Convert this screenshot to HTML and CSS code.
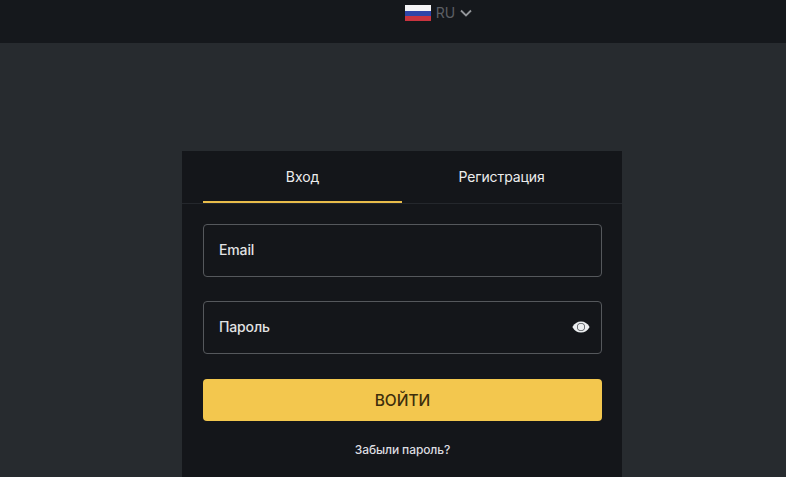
FILE: index.html
```html
<!DOCTYPE html>
<html lang="ru">
<head>
<meta charset="utf-8">
<title>Вход</title>
<link rel="stylesheet" href="styles.css">
</head>
<body>
<header class="topbar">
  <div class="lang">
    <svg class="flag" viewBox="0 0 26 16" width="26" height="16"><rect width="26" height="6" fill="#f4f4f6"/><rect y="6" width="26" height="5" fill="#2f46a8"/><rect y="11" width="26" height="5" fill="#c9343f"/></svg>
    <span class="lang-code">RU</span>
    <svg class="chev" viewBox="0 0 12 8" width="12" height="8"><path d="M1 1.5l5 5 5-5" fill="none" stroke="#93969a" stroke-width="1.8"/></svg>
  </div>
</header>
<main class="page">
  <section class="card">
    <nav class="tabs">
      <div class="tab tab-active">Вход</div>
      <div class="tab">Регистрация</div>
    </nav>
    <form class="form">
      <div class="field"><span>Email</span></div>
      <div class="field"><span>Пароль</span>
        <svg class="eye" viewBox="0 0 18 14" width="18" height="14"><path d="M0.4 7C2.4 3.2 5.4 1.4 9 1.4S15.6 3.2 17.6 7C15.6 10.8 12.6 12.6 9 12.6S2.4 10.8 0.4 7Z" fill="#eceef0"/><circle cx="9" cy="7" r="4" fill="#55585c"/><circle cx="9" cy="7" r="3.2" fill="#eceef0"/></svg>
      </div>
      <button class="submit" type="button">ВОЙТИ</button>
      <a class="forgot">Забыли пароль?</a>
    </form>
  </section>
</main>
</body>
</html>
```
FILE: styles.css
```css
* { box-sizing: border-box; }
html, body { margin: 0; height: 477px; overflow: hidden; }
body { background: #272b2f; font-family: Inter, "Liberation Sans", sans-serif; color: #e6e7e9; }
.topbar { height: 43px; background: #15181c; display: flex; justify-content: center; padding: 5px 0 0 91px; }
.lang { display: flex; align-items: flex-start; height: 18px; }
.flag { display: block; }
.lang-code { font-size: 14px; line-height: 16px; color: #5c5f64; margin-left: 5px; }
.chev { margin: 4px 0 0 5px; }
.page { padding: 108px 0 0 182px; }
.card { width: 440px; height: 326px; background: #14161a; }
.tabs { display: flex; height: 53px; padding: 0 20px 0 21px; border-bottom: 1px solid #24272c; }
.tab { width: 199px; height: 52px; text-align: center; font-size: 14px; line-height: 51px; color: #eceded; letter-spacing: -0.1px; }
.tab-active { border-bottom: 2px solid #e8bc4a; }
.form { display: flex; flex-direction: column; padding: 20px 20px 0 21px; }
.field { height: 53px; border: 1px solid #55585c; border-radius: 4px; display: flex; align-items: center; justify-content: space-between; padding: 0 11px 2px 15px; font-size: 14px; font-weight: 500; color: #e2e2e4; margin-bottom: 24px; letter-spacing: -0.15px; }
.submit { height: 42px; margin-top: 1px; border: 0; border-radius: 4px; background: #f3c74e; color: #3d2e0c; font: 500 15.5px Inter, "Liberation Sans", sans-serif; padding: 0; }
.forgot { margin-top: 21px; text-align: center; font-size: 12px; font-weight: 500; line-height: 16px; color: #dcdde0; letter-spacing: -0.1px; }
```
